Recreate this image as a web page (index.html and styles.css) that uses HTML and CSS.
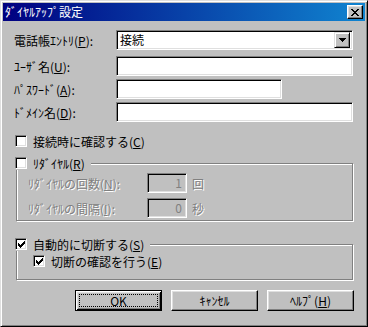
FILE: index.html
```
<!DOCTYPE html>
<html lang="ja">
<head>
    <meta charset="UTF-8">
    <title>ﾀﾞｲﾔﾙｱｯﾌﾟ設定</title>
    <link rel="stylesheet" href="styles.css">
</head>
<body>
    <div class="window">
        <!-- Title bar -->
        <div class="titlebar">
            <span class="title">ﾀﾞｲﾔﾙｱｯﾌﾟ設定</span>
            <button class="close-btn">
                <svg width="8" height="7" viewBox="0 0 8 7" shape-rendering="crispEdges"><path d="M0 0h2v1h-2z M6 0h2v1h-2z M1 1h2v1h-2z M5 1h2v1h-2z M2 2h4v1h-4z M3 3h2v1h-2z M2 4h4v1h-4z M1 5h2v1h-2z M5 5h2v1h-2z M0 6h2v1h-2z M6 6h2v1h-2z" fill="#000"/></svg>
            </button>
        </div>

        <div class="content">
            <!-- Account fields -->
            <div class="field-row row-entry">
                <label class="field-label">電話帳ｴﾝﾄﾘ(<u>P</u>):</label>
                <div class="combo">
                    <span class="combo-text">接続</span>
                    <span class="combo-btn">
                        <svg width="7" height="4" viewBox="0 0 7 4" shape-rendering="crispEdges"><path d="M0 0h7v1h-7z M1 1h5v1h-5z M2 2h3v1h-3z M3 3h1v1h-1z" fill="#000"/></svg>
                    </span>
                </div>
            </div>
            <div class="field-row row-tight">
                <label class="field-label">ﾕｰｻﾞ名(<u>U</u>):</label>
                <div class="textbox"></div>
            </div>
            <div class="field-row row-tight">
                <label class="field-label">ﾊﾟｽﾜｰﾄﾞ(<u>A</u>):</label>
                <div class="textbox textbox-short"></div>
            </div>
            <div class="field-row">
                <label class="field-label">ﾄﾞﾒｲﾝ名(<u>D</u>):</label>
                <div class="textbox"></div>
            </div>

            <div class="check-row confirm-row">
                <span class="checkbox"></span>
                <span>接続時に確認する(<u>C</u>)</span>
            </div>

            <!-- Redial group -->
            <fieldset class="group group-redial">
                <legend class="check-row">
                    <span class="checkbox"></span>
                    <span>ﾘﾀﾞｲﾔﾙ(<u>R</u>)</span>
                </legend>
                <div class="sub-row">
                    <span class="sub-label disabled">ﾘﾀﾞｲﾔﾙの回数(<u>N</u>):</span>
                    <span class="numbox">1</span>
                    <span class="unit disabled">回</span>
                </div>
                <div class="sub-row">
                    <span class="sub-label disabled">ﾘﾀﾞｲﾔﾙの間隔(<u>I</u>):</span>
                    <span class="numbox">0</span>
                    <span class="unit disabled">秒</span>
                </div>
            </fieldset>

            <!-- Auto disconnect group -->
            <fieldset class="group group-auto">
                <legend class="check-row">
                    <span class="checkbox checked"><svg width="7" height="7" viewBox="0 0 7 7" shape-rendering="crispEdges"><path d="M6 0h1v1h-1z M5 1h2v1h-2z M0 2h1v1h-1z M4 2h3v1h-3z M0 3h2v1h-2z M3 3h3v1h-3z M0 4h5v1h-5z M1 5h3v1h-3z M2 6h1v1h-1z" fill="#000"/></svg></span>
                    <span>自動的に切断する(<u>S</u>)</span>
                </legend>
                <div class="check-row">
                    <span class="checkbox checked"><svg width="7" height="7" viewBox="0 0 7 7" shape-rendering="crispEdges"><path d="M6 0h1v1h-1z M5 1h2v1h-2z M0 2h1v1h-1z M4 2h3v1h-3z M0 3h2v1h-2z M3 3h3v1h-3z M0 4h5v1h-5z M1 5h3v1h-3z M2 6h1v1h-1z" fill="#000"/></svg></span>
                    <span>切断の確認を行う(<u>E</u>)</span>
                </div>
            </fieldset>

            <!-- Buttons -->
            <div class="button-row">
                <button class="btn btn-default"><span class="focus">OK</span></button>
                <button class="btn"><span>ｷｬﾝｾﾙ</span></button>
                <button class="btn"><span>ﾍﾙﾌﾟ(<u>H</u>)</span></button>
            </div>
        </div>
    </div>
</body>
</html>
```

FILE: styles.css
```
* { margin: 0; padding: 0; box-sizing: border-box; }
body { font-family: "Noto Sans CJK JP", "Noto Sans", sans-serif; font-size: 12px; background: #c0c0c0; color: #000; }
u { text-decoration: underline; text-underline-offset: 1px; }

/* Window frame */
.window { width: 368px; height: 327px; background: #c0c0c0; padding: 2px;
    border: 1px solid; border-color: #dfdfdf #000 #000 #dfdfdf;
    box-shadow: inset 1px 1px #fff, inset -1px -1px #808080; }

/* Title bar */
.titlebar { height: 18px; display: flex; align-items: center; justify-content: space-between; padding: 0 2px 0 2px;
    background: linear-gradient(to right, #000080, #1084d0); }
.title { color: #fff; font-size: 12px; line-height: 18px; letter-spacing: 0; }
.close-btn { width: 16px; height: 14px; display: flex; align-items: center; justify-content: center; background: #c0c0c0;
    border: 1px solid; border-color: #fff #000 #000 #fff; box-shadow: inset -1px -1px #808080, inset 1px 1px #dfdfdf; }

.content { padding: 9px 12px 0 11px; }

/* Fields */
.field-row { display: flex; align-items: center; height: 20px; margin-bottom: 3px; }
.row-entry { margin-bottom: 6px; }
.field-label { width: 102px; white-space: nowrap; }
.textbox, .combo, .numbox { height: 20px; background: #fff;
    border: 1px solid; border-color: #808080 #fff #fff #808080;
    box-shadow: inset 1px 1px #000, inset -1px -1px #dfdfdf; }
.textbox { flex: 1; }
.textbox-short { flex: none; width: 166px; }
.combo { flex: 1; display: flex; align-items: center; justify-content: space-between; padding: 2px 2px 2px 3px; }
.combo-text { line-height: 16px; }
.combo-btn { width: 16px; height: 16px; display: flex; align-items: center; justify-content: center; background: #c0c0c0;
    border: 1px solid; border-color: #dfdfdf #000 #000 #dfdfdf; box-shadow: inset 1px 1px #fff, inset -1px -1px #808080; }

/* Checkboxes */
.check-row { display: flex; align-items: center; gap: 6px; height: 14px; white-space: nowrap; }
.confirm-row { margin: 12px 0 8px 1px; }
.checkbox { width: 12px; height: 12px; flex: none; background: #fff; display: flex; align-items: center; justify-content: center;
    border: 1px solid; border-color: #808080 #fff #fff #808080;
    box-shadow: inset 1px 1px #000, inset -1px -1px #dfdfdf; }

/* Group boxes */
.group { margin-left: 2px; min-width: 0; border: 1px solid #808080; box-shadow: inset 1px 1px #fff, 1px 1px #fff; }
.group legend { background: #c0c0c0; padding-right: 6px; }
.group-redial { padding: 3px 0 2px 11px; }
.group-redial legend { margin-left: -13px; }
.group-auto { margin-top: 16px; padding: 3px 0 11px 16px; }
.group-auto legend { margin-left: -18px; }

.sub-row { display: flex; align-items: center; height: 20px; margin-bottom: 5px; }
.sub-row:last-child { margin-bottom: 0; }
.sub-label { width: 119px; white-space: nowrap; }
.disabled { color: #808080; text-shadow: 1px 1px #fff; }
.numbox { width: 40px; background: #c0c0c0; color: #808080; text-align: right; padding-right: 4px; line-height: 18px; }
.unit { margin-left: 5px; }

/* Buttons */
.button-row { display: flex; justify-content: flex-end; gap: 9px; margin: 10px -1px 0 0; }
.btn { width: 87px; height: 21px; padding: 2px; background: #c0c0c0; font: inherit; color: #000;
    border: 1px solid; border-color: #fff #000 #000 #fff; box-shadow: inset -1px -1px #808080, inset 1px 1px #dfdfdf; }
.btn span { display: flex; align-items: center; justify-content: center; height: 100%; line-height: 15px; }
.btn-default { border: 1px solid #000; padding: 3px;
    box-shadow: inset 1px 1px #fff, inset -1px -1px #000, inset 2px 2px #dfdfdf, inset -2px -2px #808080; }
.btn-default .focus { border: 1px dotted #000; }
```
